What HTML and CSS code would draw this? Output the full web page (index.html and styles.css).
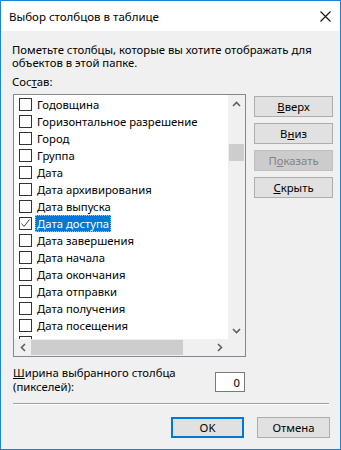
FILE: index.html
```html
<!DOCTYPE html>
<html lang="ru">
  <head>
    <meta charset="UTF-8" />
    <meta name="viewport" content="width=device-width, initial-scale=1.0" />
    <title>Выбор столбцов в таблице</title>
    <link rel="stylesheet" href="styles.css">
  </head>
  <body>
    <div class="window">
      <div class="titlebar">
        <span class="title">Выбор столбцов в таблице</span>
        <svg class="close" width="11" height="11" viewBox="0 0 11 11">
          <path d="M0.5 0.5 L10.5 10.5 M10.5 0.5 L0.5 10.5" stroke="#111" stroke-width="1.1" fill="none" />
        </svg>
      </div>

      <div class="content">
        <p class="hint">Пометьте столбцы, которые вы хотите отображать для объектов в этой папке.</p>
        <div class="caption">Сос<u>т</u>ав:</div>

        <div class="picker">
          <div class="listbox">
            <div class="rows">
              <div class="row"><span class="check"></span><span class="name">Годовщина</span></div>
              <div class="row"><span class="check"></span><span class="name">Горизонтальное разрешение</span></div>
              <div class="row"><span class="check"></span><span class="name">Город</span></div>
              <div class="row"><span class="check"></span><span class="name">Группа</span></div>
              <div class="row"><span class="check"></span><span class="name">Дата</span></div>
              <div class="row"><span class="check"></span><span class="name">Дата архивирования</span></div>
              <div class="row"><span class="check"></span><span class="name">Дата выпуска</span></div>
              <div class="row">
                <span class="check">
                  <svg width="11" height="11" viewBox="0 0 11 11">
                    <path d="M1.5 5.5 L4 8.5 L9.5 1.5" stroke="#444" stroke-width="1" fill="none" />
                  </svg>
                </span>
                <span class="name selected">Дата доступа</span>
              </div>
              <div class="row"><span class="check"></span><span class="name">Дата завершения</span></div>
              <div class="row"><span class="check"></span><span class="name">Дата начала</span></div>
              <div class="row"><span class="check"></span><span class="name">Дата окончания</span></div>
              <div class="row"><span class="check"></span><span class="name">Дата отправки</span></div>
              <div class="row"><span class="check"></span><span class="name">Дата получения</span></div>
              <div class="row"><span class="check"></span><span class="name">Дата посещения</span></div>
              <div class="row"><span class="check"></span><span class="name">Дата просмотра</span></div>
            </div>

            <div class="vscroll">
              <div class="arrow">
                <svg width="9" height="6" viewBox="0 0 9 6"><path d="M1 5 L4.5 1.5 L8 5" stroke="#606060" stroke-width="1.6" fill="none" /></svg>
              </div>
              <div class="vtrack"><div class="vthumb"></div></div>
              <div class="arrow">
                <svg width="9" height="6" viewBox="0 0 9 6"><path d="M1 1 L4.5 4.5 L8 1" stroke="#606060" stroke-width="1.6" fill="none" /></svg>
              </div>
            </div>

            <div class="hscroll">
              <div class="arrow">
                <svg width="6" height="9" viewBox="0 0 6 9"><path d="M5 1 L1.5 4.5 L5 8" stroke="#606060" stroke-width="1.6" fill="none" /></svg>
              </div>
              <div class="htrack"><div class="hthumb"></div></div>
              <div class="arrow">
                <svg width="6" height="9" viewBox="0 0 6 9"><path d="M1 1 L4.5 4.5 L1 8" stroke="#606060" stroke-width="1.6" fill="none" /></svg>
              </div>
            </div>
            <div class="corner"></div>
          </div>

          <div class="side">
            <button class="btn"><u>В</u>верх</button>
            <button class="btn">В<u>н</u>из</button>
            <button class="btn" disabled>П<u>о</u>казать</button>
            <button class="btn"><u>С</u>крыть</button>
          </div>
        </div>

        <div class="width-row">
          <label class="width-label"><u>Ш</u>ирина выбранного столбца (пикселей):</label>
          <input class="width-input" type="text" value="0" />
        </div>

        <div class="separator"></div>

        <div class="actions">
          <button class="btn default">OK</button>
          <button class="btn">Отмена</button>
        </div>
      </div>
    </div>
  </body>
</html>
```

FILE: styles.css
```css
html,
body {
  margin: 0;
  padding: 0;
  background: #fff;
}

body {
  font-family: "Noto Sans", "Segoe UI", sans-serif;
  font-size: 11.3px;
  color: #000;
}

.window {
  width: 341px;
  height: 450px;
  box-sizing: border-box;
  border: 1px solid #1883d7;
  display: flex;
  flex-direction: column;
}

.titlebar {
  height: 30px;
  background: #fff;
  display: flex;
  align-items: center;
  justify-content: space-between;
  padding: 0 9px 0 8px;
}

.title {
  font-size: 11.5px;
}

.close {
  display: block;
}

.content {
  flex: 1;
  background: #f0f0f0;
  padding-left: 11px;
}

.hint {
  margin: 12px 0 0;
  line-height: 13px;
  width: 300px;
}

.caption {
  margin-top: 6px;
  line-height: 13px;
}

u {
  text-decoration: underline;
}

.picker {
  display: flex;
  margin-top: 6px;
}

.listbox {
  width: 233px;
  height: 263px;
  box-sizing: border-box;
  margin-left: 1px;
  border: 1px solid #828790;
  background: #fff;
  display: grid;
  grid-template-columns: 1fr 17px;
  grid-template-rows: 1fr 17px;
}

.rows {
  overflow: hidden;
  padding-top: 1px;
}

.row {
  height: 17px;
  display: flex;
  align-items: center;
  padding-left: 5px;
}

.check {
  width: 13px;
  height: 13px;
  box-sizing: border-box;
  border: 1px solid #333;
  background: #fff;
  display: flex;
  align-items: center;
  justify-content: center;
  flex-shrink: 0;
}

.check svg {
  display: block;
}

.name {
  margin-left: 3px;
  padding: 1px 2px;
  white-space: nowrap;
  line-height: 15px;
}

.name.selected {
  background: #0078d7;
  color: #fff;
  outline: 1px dotted #f4b183;
  outline-offset: -1px;
}

.vscroll {
  background: #f0f0f0;
  display: flex;
  flex-direction: column;
}

.hscroll {
  background: #f0f0f0;
  display: flex;
}

.corner {
  background: #f0f0f0;
}

.arrow {
  width: 17px;
  height: 17px;
  display: flex;
  align-items: center;
  justify-content: center;
  flex-shrink: 0;
}

.vtrack {
  flex: 1;
  padding: 32px 1px 0;
}

.vthumb {
  height: 17px;
  background: #cdcdcd;
}

.htrack {
  flex: 1;
  padding: 1px 0;
}

.hthumb {
  width: 152px;
  height: 15px;
  background: #cdcdcd;
}

.side {
  display: flex;
  flex-direction: column;
  gap: 6px;
  margin: 2px 0 0 8px;
}

.btn {
  width: 79px;
  height: 21px;
  box-sizing: border-box;
  border: 1px solid #adadad;
  background: #e1e1e1;
  font-family: inherit;
  font-size: inherit;
  color: #000;
  padding: 0;
}

.btn:disabled {
  background: #cccccc;
  border-color: #bfbfbf;
  color: #838383;
}

.width-row {
  display: flex;
  align-items: flex-start;
  margin-top: 9px;
}

.width-label {
  width: 202px;
  margin-left: 1px;
  line-height: 13.5px;
}

.width-input {
  width: 30px;
  height: 20px;
  box-sizing: border-box;
  margin-top: 6px;
  border: 1px solid #7a7a7a;
  background: #fff;
  font-family: inherit;
  font-size: inherit;
  text-align: right;
  padding: 0 4px;
}

.separator {
  width: 316px;
  margin: 10px 0 0 1px;
  border-top: 1px solid #a0a0a0;
  border-bottom: 1px solid #fff;
}

.actions {
  display: flex;
  gap: 13px;
  margin: 12px 0 0 159px;
}

.actions .btn {
  width: 73px;
}

.btn.default {
  border: 2px solid #0078d7;
}
```
